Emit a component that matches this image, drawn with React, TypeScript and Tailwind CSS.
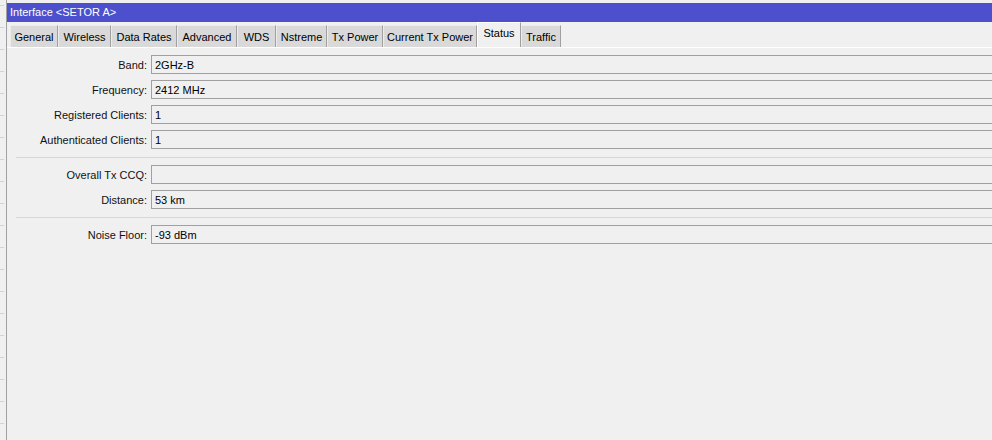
import React from 'react';

const tabs: { name: string; w: string }[] = [
  { name: 'General', w: 'w-[48px]' },
  { name: 'Wireless', w: 'w-[53px]' },
  { name: 'Data Rates', w: 'w-[66px]' },
  { name: 'Advanced', w: 'w-[60px]' },
  { name: 'WDS', w: 'w-[39px]' },
  { name: 'Nstreme', w: 'w-[51px]' },
  { name: 'Tx Power', w: 'w-[56px]' },
  { name: 'Current Tx Power', w: 'w-[94px]' },
  { name: 'Status', w: 'w-[44px]' },
  { name: 'Traffic', w: 'w-[40px]' },
];

const groups: { label: string; value: string }[][] = [
  [
    { label: 'Band:', value: '2GHz-B' },
    { label: 'Frequency:', value: '2412 MHz' },
    { label: 'Registered Clients:', value: '1' },
    { label: 'Authenticated Clients:', value: '1' },
  ],
  [
    { label: 'Overall Tx CCQ:', value: '' },
    { label: 'Distance:', value: '53 km' },
  ],
  [{ label: 'Noise Floor:', value: '-93 dBm' }],
];

function Field({ label, value }: { label: string; value: string }) {
  return (
    <div className="flex items-center h-[19px]">
      <div className="w-[140px] shrink-0 text-right pt-[1px] text-[11px] text-[#111]">{label}</div>
      <div className="ml-[4px] flex-1 -mr-[6px] h-[19px] border border-[#a0a0a0] bg-[#f0f0f0] pl-[3px] pt-[1px] flex items-center text-[11px] text-black">
        {value}
      </div>
    </div>
  );
}

export default function App() {
  const ticks = Array.from({ length: 20 });
  return (
    <div
      className="flex w-[992px] h-[440px] overflow-hidden bg-[#f0f0f0]"
      style={{ fontFamily: '"Liberation Sans", Arial, sans-serif' }}
    >
      {/* left strip with ticks */}
      <div className="w-[6px] shrink-0 flex flex-col pt-[5px]">
        {ticks.map((_, i) => (
          <div key={i} className="h-[22px] shrink-0">
            <div className="w-[4px] h-[1px] bg-[#d2d2d2]" />
          </div>
        ))}
      </div>
      <div className="w-[1px] shrink-0 bg-[#a0a0a0]" />

      {/* window */}
      <div className="flex-1 flex flex-col min-w-0">
        <div className="h-[3px] shrink-0" />
        <div className="h-[19px] shrink-0 bg-[#4c50cc] text-white text-[11px] pl-[3px] flex items-center">
          Interface &lt;SETOR A&gt;
        </div>

        {/* tabs */}
        <div className="flex items-end pl-[3px] h-[25px] shrink-0">
          {tabs.map((t) => {
            const active = t.name === 'Status';
            return (
              <div
                key={t.name}
                className={
                  active
                    ? `${t.w} h-[25px] pb-[3px] flex items-center justify-center bg-[#f0f0f0] border-t border-l border-white border-r border-r-[#a0a0a0] text-[11px] text-black whitespace-nowrap`
                    : `${t.w} h-[22px] pt-[1px] flex items-center justify-center bg-[#d9d9d9] border-t border-l border-[#ececec] border-r border-r-[#a0a0a0] text-[11px] text-black whitespace-nowrap`
                }
              >
                {t.name}
              </div>
            );
          })}
        </div>

        {/* pane */}
        <div className="flex-1 border-t border-white pt-[7px] flex flex-col">
          {groups.map((g, gi) => (
            <div key={gi} className="flex flex-col">
              {gi > 0 && <div className="ml-[9px] mt-[8px] mb-[7px] h-[1px] bg-[#d6d6d6]" />}
              <div className="flex flex-col gap-[6px]">
                {g.map((f) => (
                  <Field key={f.label} label={f.label} value={f.value} />
                ))}
              </div>
            </div>
          ))}
        </div>
      </div>
    </div>
  );
}
